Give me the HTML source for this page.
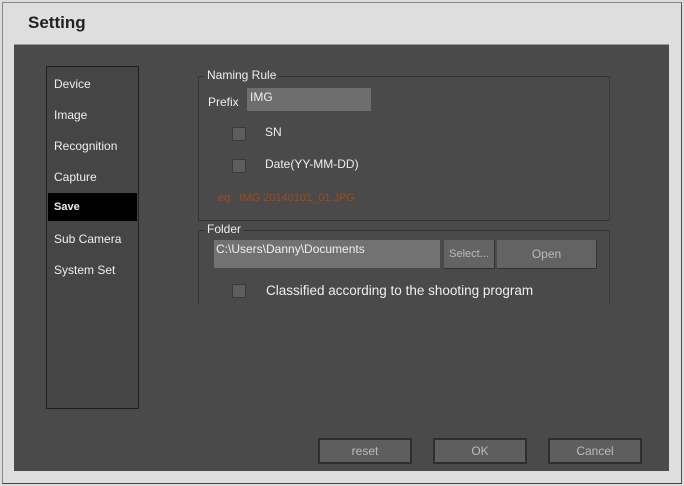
<!DOCTYPE html>
<html><head><style>
*{margin:0;padding:0;box-sizing:border-box}
body{width:684px;height:486px;background:#dcdcdc;position:relative;overflow:hidden;font-family:"Liberation Sans",sans-serif}
.frame{position:absolute;left:2px;top:2px;width:680px;height:482px;border:1px solid #888;border-right-color:#555;border-bottom-color:#444;background:#dedede}
.title{position:absolute;left:28px;top:13px;font-size:17px;font-weight:bold;color:#222}
.panel{position:absolute;left:14px;top:44px;width:655px;height:427px;background:#4a4a4b;border-top:1px solid #999}
.abs{position:absolute}
.side{left:46px;top:66px;width:93px;height:343px;border:1px solid #1e1e1e;background:#454546}
.item{position:absolute;left:7px;font-size:12px;color:#eee}
.sel{position:absolute;left:1px;top:126px;width:89px;height:28px;background:#000}
.grp{border:1px solid #333;border-right-color:#3a3a3a}
.t{color:#eee;font-size:12px}
.cb{width:14px;height:14px;background:#5d5d5d;border:1px solid #3a3a3a}
.btn{background:#5e5e5e;border:2px solid #2e2e2e;color:#bbb;font-size:12px;text-align:center;line-height:22px}
</style></head><body>
<div class="frame"></div>
<div class="title">Setting</div>
<div class="panel"></div>
<div class="abs side">
<div class="sel"></div>
<div class="item" style="top:10px">Device</div>
<div class="item" style="top:41px">Image</div>
<div class="item" style="top:72px">Recognition</div>
<div class="item" style="top:103px">Capture</div>
<div class="item" style="top:134px;font-weight:bold;font-size:11px">Save</div>
<div class="item" style="top:165px">Sub Camera</div>
<div class="item" style="top:196px">System Set</div>
</div>
<div class="abs grp" style="left:198px;top:76px;width:412px;height:145px"></div>
<div class="abs t" style="left:204px;top:68px;background:#4a4a4b;padding:0 3px">Naming Rule</div>
<div class="abs t" style="left:208px;top:95px">Prefix</div>
<div class="abs" style="left:247px;top:88px;width:124px;height:23px;background:#6e6e6e"></div>
<div class="abs t" style="left:250px;top:90px">IMG</div>
<div class="abs cb" style="left:232px;top:127px"></div>
<div class="abs t" style="left:265px;top:125px">SN</div>
<div class="abs cb" style="left:232px;top:159px"></div>
<div class="abs t" style="left:265px;top:157px">Date(YY-MM-DD)</div>
<div class="abs" style="left:218px;top:192px;font-size:11px;color:#a04a1c">eq : IMG 20140101_01.JPG</div>
<div class="abs grp" style="left:198px;top:230px;width:412px;height:74px;border-bottom:none"></div>
<div class="abs t" style="left:205px;top:222px;background:#4a4a4b;padding:0 2px">Folder</div>
<div class="abs" style="left:214px;top:240px;width:226px;height:28px;background:#727272"></div>
<div class="abs t" style="left:216px;top:242px">C:\Users\Danny\Documents</div>
<div class="abs" style="left:444px;top:240px;width:51px;height:29px;background:#636363;border-right:1px solid #333;border-bottom:1px solid #333;color:#bbb;font-size:11px;line-height:29px;text-align:center">Select...</div>
<div class="abs" style="left:497px;top:240px;width:100px;height:29px;background:#636363;border-right:1px solid #333;border-bottom:1px solid #333;color:#bbb;font-size:12px;line-height:29px;text-align:center">Open</div>
<div class="abs cb" style="left:232px;top:284px"></div>
<div class="abs t" style="left:266px;top:283px;font-size:13.5px">Classified according to the shooting program</div>
<div class="abs btn" style="left:318px;top:438px;width:94px;height:26px">reset</div>
<div class="abs btn" style="left:433px;top:438px;width:94px;height:26px">OK</div>
<div class="abs btn" style="left:548px;top:438px;width:94px;height:26px">Cancel</div>
</body></html>
